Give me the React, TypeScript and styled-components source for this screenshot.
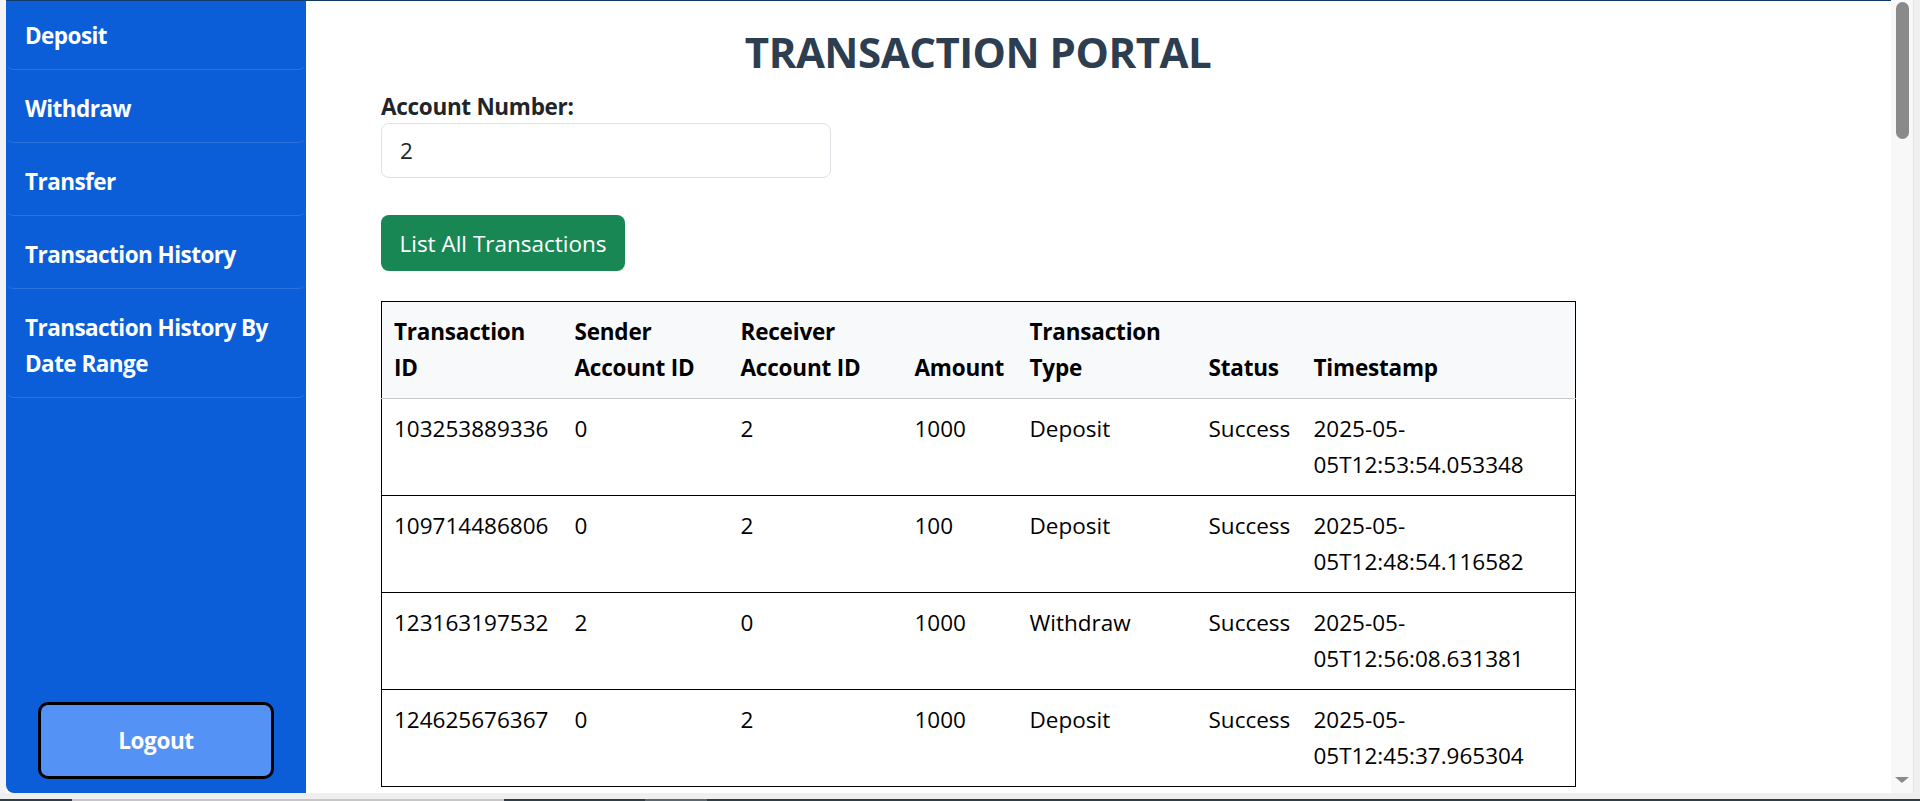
import React from 'react';
import styled, { createGlobalStyle } from 'styled-components';

interface Transaction {
  id: string;
  sender: string;
  receiver: string;
  amount: string;
  type: string;
  status: string;
  timestamp: string;
}

const transactions: Transaction[] = [
  { id: '103253889336', sender: '0', receiver: '2', amount: '1000', type: 'Deposit', status: 'Success', timestamp: '2025-05-05T12:53:54.053348' },
  { id: '109714486806', sender: '0', receiver: '2', amount: '100', type: 'Deposit', status: 'Success', timestamp: '2025-05-05T12:48:54.116582' },
  { id: '123163197532', sender: '2', receiver: '0', amount: '1000', type: 'Withdraw', status: 'Success', timestamp: '2025-05-05T12:56:08.631381' },
  { id: '124625676367', sender: '0', receiver: '2', amount: '1000', type: 'Deposit', status: 'Success', timestamp: '2025-05-05T12:45:37.965304' },
];

const columns = [
  { label: 'Transaction ID', width: 181 },
  { label: 'Sender Account ID', width: 166 },
  { label: 'Receiver Account ID', width: 174 },
  { label: 'Amount', width: 115 },
  { label: 'Transaction Type', width: 179 },
  { label: 'Status', width: 105 },
  { label: 'Timestamp', width: 274 },
];

const menuItems = ['Deposit', 'Withdraw', 'Transfer', 'Transaction History', 'Transaction History By Date Range'];

const GlobalStyle = createGlobalStyle`
  html, body {
    margin: 0;
    padding: 0;
    overflow: hidden;
    background: #ffffff;
  }
  body {
    font-family: 'Open Sans', 'Noto Sans', sans-serif;
    color: #212529;
  }
  * {
    box-sizing: border-box;
  }
`;

const App: React.FC = () => {
  return (
    <>
      <GlobalStyle />
      <StyledWindow>
        <StyledFrameRow>
          <StyledLeftFrame />
          <StyledPage>
            <StyledSidebar>
              <StyledMenu>
                {menuItems.map((item) => (
                  <StyledMenuItem key={item}>{item}</StyledMenuItem>
                ))}
              </StyledMenu>
              <StyledLogout>Logout</StyledLogout>
            </StyledSidebar>
            <StyledMain>
              <StyledContent>
                <StyledTitle>TRANSACTION PORTAL</StyledTitle>
                <StyledLabel htmlFor="account">Account Number:</StyledLabel>
                <StyledInput id="account" defaultValue="2" />
                <StyledListButton>List All Transactions</StyledListButton>
                <StyledTable>
                  <colgroup>
                    {columns.map((col) => (
                      <col key={col.label} style={{ width: col.width }} />
                    ))}
                  </colgroup>
                  <thead>
                    <tr>
                      {columns.map((col) => (
                        <StyledTh key={col.label}>{col.label}</StyledTh>
                      ))}
                    </tr>
                  </thead>
                  <tbody>
                    {transactions.map((tx) => (
                      <tr key={tx.id}>
                        <StyledTd>{tx.id}</StyledTd>
                        <StyledTd>{tx.sender}</StyledTd>
                        <StyledTd>{tx.receiver}</StyledTd>
                        <StyledTd>{tx.amount}</StyledTd>
                        <StyledTd>{tx.type}</StyledTd>
                        <StyledTd>{tx.status}</StyledTd>
                        <StyledTd>{tx.timestamp}</StyledTd>
                      </tr>
                    ))}
                  </tbody>
                </StyledTable>
              </StyledContent>
            </StyledMain>
          </StyledPage>
          <StyledScrollbar>
            <StyledThumb />
            <StyledArrow />
          </StyledScrollbar>
          <StyledRightFrame />
        </StyledFrameRow>
        <StyledBottomFrame>
          <StyledBottomBand />
          <StyledTaskStrip>
            <StyledStripPart tone="dark" size={72} />
            <StyledStripPart tone="light" size={432} />
            <StyledStripPart tone="dark" size={141} />
            <StyledStripPart tone="mid" size={62} />
            <StyledStripPart tone="dark" size={0} grow />
          </StyledTaskStrip>
        </StyledBottomFrame>
      </StyledWindow>
    </>
  );
};

const StyledWindow = styled.div`
  width: 1920px;
  height: 801px;
  display: flex;
  flex-direction: column;
  overflow: hidden;
`;

const StyledFrameRow = styled.div`
  display: flex;
  height: 793px;
`;

const StyledLeftFrame = styled.div`
  width: 6px;
  background: #f3f3f3;
`;

const StyledPage = styled.div`
  flex: 1;
  display: flex;
  border-top: 1px solid #123a66;
  overflow: hidden;
  background: #ffffff;
`;

const StyledSidebar = styled.nav`
  width: 300px;
  flex-shrink: 0;
  display: flex;
  flex-direction: column;
  justify-content: space-between;
  align-items: center;
  background: #0b5ed7;
  border-bottom-left-radius: 8px;
  padding-bottom: 14px;
`;

const StyledMenu = styled.div`
  width: 100%;
  display: flex;
  flex-direction: column;
`;

const StyledMenuItem = styled.a`
  display: block;
  padding: 21px 19px 15px;
  color: #ffffff;
  font-size: 22.5px;
  font-weight: 700;
  line-height: 36px;
  letter-spacing: -0.55px;
  border-bottom: 1px solid rgba(255, 255, 255, 0.13);
  border-radius: 8px;
  cursor: pointer;
  &:first-child {
    padding-top: 17px;
  }
`;

const StyledLogout = styled.button`
  width: 236px;
  height: 77px;
  background: #5492f5;
  border: 3px solid #000000;
  border-radius: 10px;
  color: #ffffff;
  font-family: inherit;
  font-size: 22.5px;
  font-weight: 700;
  letter-spacing: -0.4px;
  cursor: pointer;
`;

const StyledMain = styled.main`
  flex: 1;
  padding: 26px 0 0 75px;
  overflow: hidden;
`;

const StyledContent = styled.div`
  width: 1194px;
  display: flex;
  flex-direction: column;
  align-items: flex-start;
`;

const StyledTitle = styled.h1`
  align-self: stretch;
  margin: 0 0 13px;
  text-align: center;
  font-size: 42px;
  font-weight: 700;
  line-height: 50px;
  letter-spacing: -0.5px;
  color: #2c3e50;
`;

const StyledLabel = styled.label`
  display: block;
  font-size: 22.5px;
  font-weight: 700;
  line-height: 33px;
  letter-spacing: -0.3px;
  color: #212529;
`;

const StyledInput = styled.input`
  width: 450px;
  height: 55px;
  padding: 0 18px;
  border: 1px solid #dee2e6;
  border-radius: 8px;
  font-family: inherit;
  font-size: 22.5px;
  color: #212529;
  outline: none;
`;

const StyledListButton = styled.button`
  margin-top: 37px;
  width: 244px;
  height: 56px;
  background: #198754;
  border: none;
  border-radius: 8px;
  color: #ffffff;
  font-family: inherit;
  font-size: 22.5px;
  cursor: pointer;
`;

const StyledTable = styled.table`
  margin-top: 30px;
  width: 1194px;
  table-layout: fixed;
  border-collapse: collapse;
  border: 1px solid #000000;
  font-size: 22.5px;
  line-height: 36px;
  color: #000000;
`;

const StyledTh = styled.th`
  padding: 12px 12px;
  text-align: left;
  vertical-align: bottom;
  font-weight: 700;
  letter-spacing: -0.2px;
  background: #f8f9fa;
  border-bottom: 1px solid #c8c8c8;
`;

const StyledTd = styled.td`
  padding: 12px 12px;
  vertical-align: top;
  border-bottom: 1px solid #000000;
`;

const StyledScrollbar = styled.div`
  width: 22px;
  display: flex;
  flex-direction: column;
  justify-content: space-between;
  align-items: center;
  background: #f8f8f8;
  padding: 2px 0 10px;
`;

const StyledThumb = styled.div`
  width: 13px;
  height: 137px;
  border-radius: 7px;
  background: #8a8a8a;
`;

const StyledArrow = styled.div`
  width: 0;
  height: 0;
  border-left: 7px solid transparent;
  border-right: 7px solid transparent;
  border-top: 6px solid #8a8a8a;
`;

const StyledRightFrame = styled.div`
  width: 7px;
  background: #f0f0f0;
  border-left: 1px solid #e2e2e2;
`;

const StyledBottomFrame = styled.div`
  height: 8px;
  display: flex;
  flex-direction: column;
`;

const StyledBottomBand = styled.div`
  height: 6px;
  background: #efefef;
`;

const StyledTaskStrip = styled.div`
  height: 2px;
  display: flex;
`;

interface StripProps {
  tone: 'dark' | 'light' | 'mid';
  size: number;
  grow?: boolean;
}

const stripColors = {
  dark: '#2f3e46',
  light: '#c6c6c6',
  mid: '#5b6770',
};

const StyledStripPart = styled.div<StripProps>`
  width: ${(props) => props.size}px;
  flex: ${(props) => (props.grow ? 1 : 'none')};
  background: ${(props) => stripColors[props.tone]};
`;

export default App;
